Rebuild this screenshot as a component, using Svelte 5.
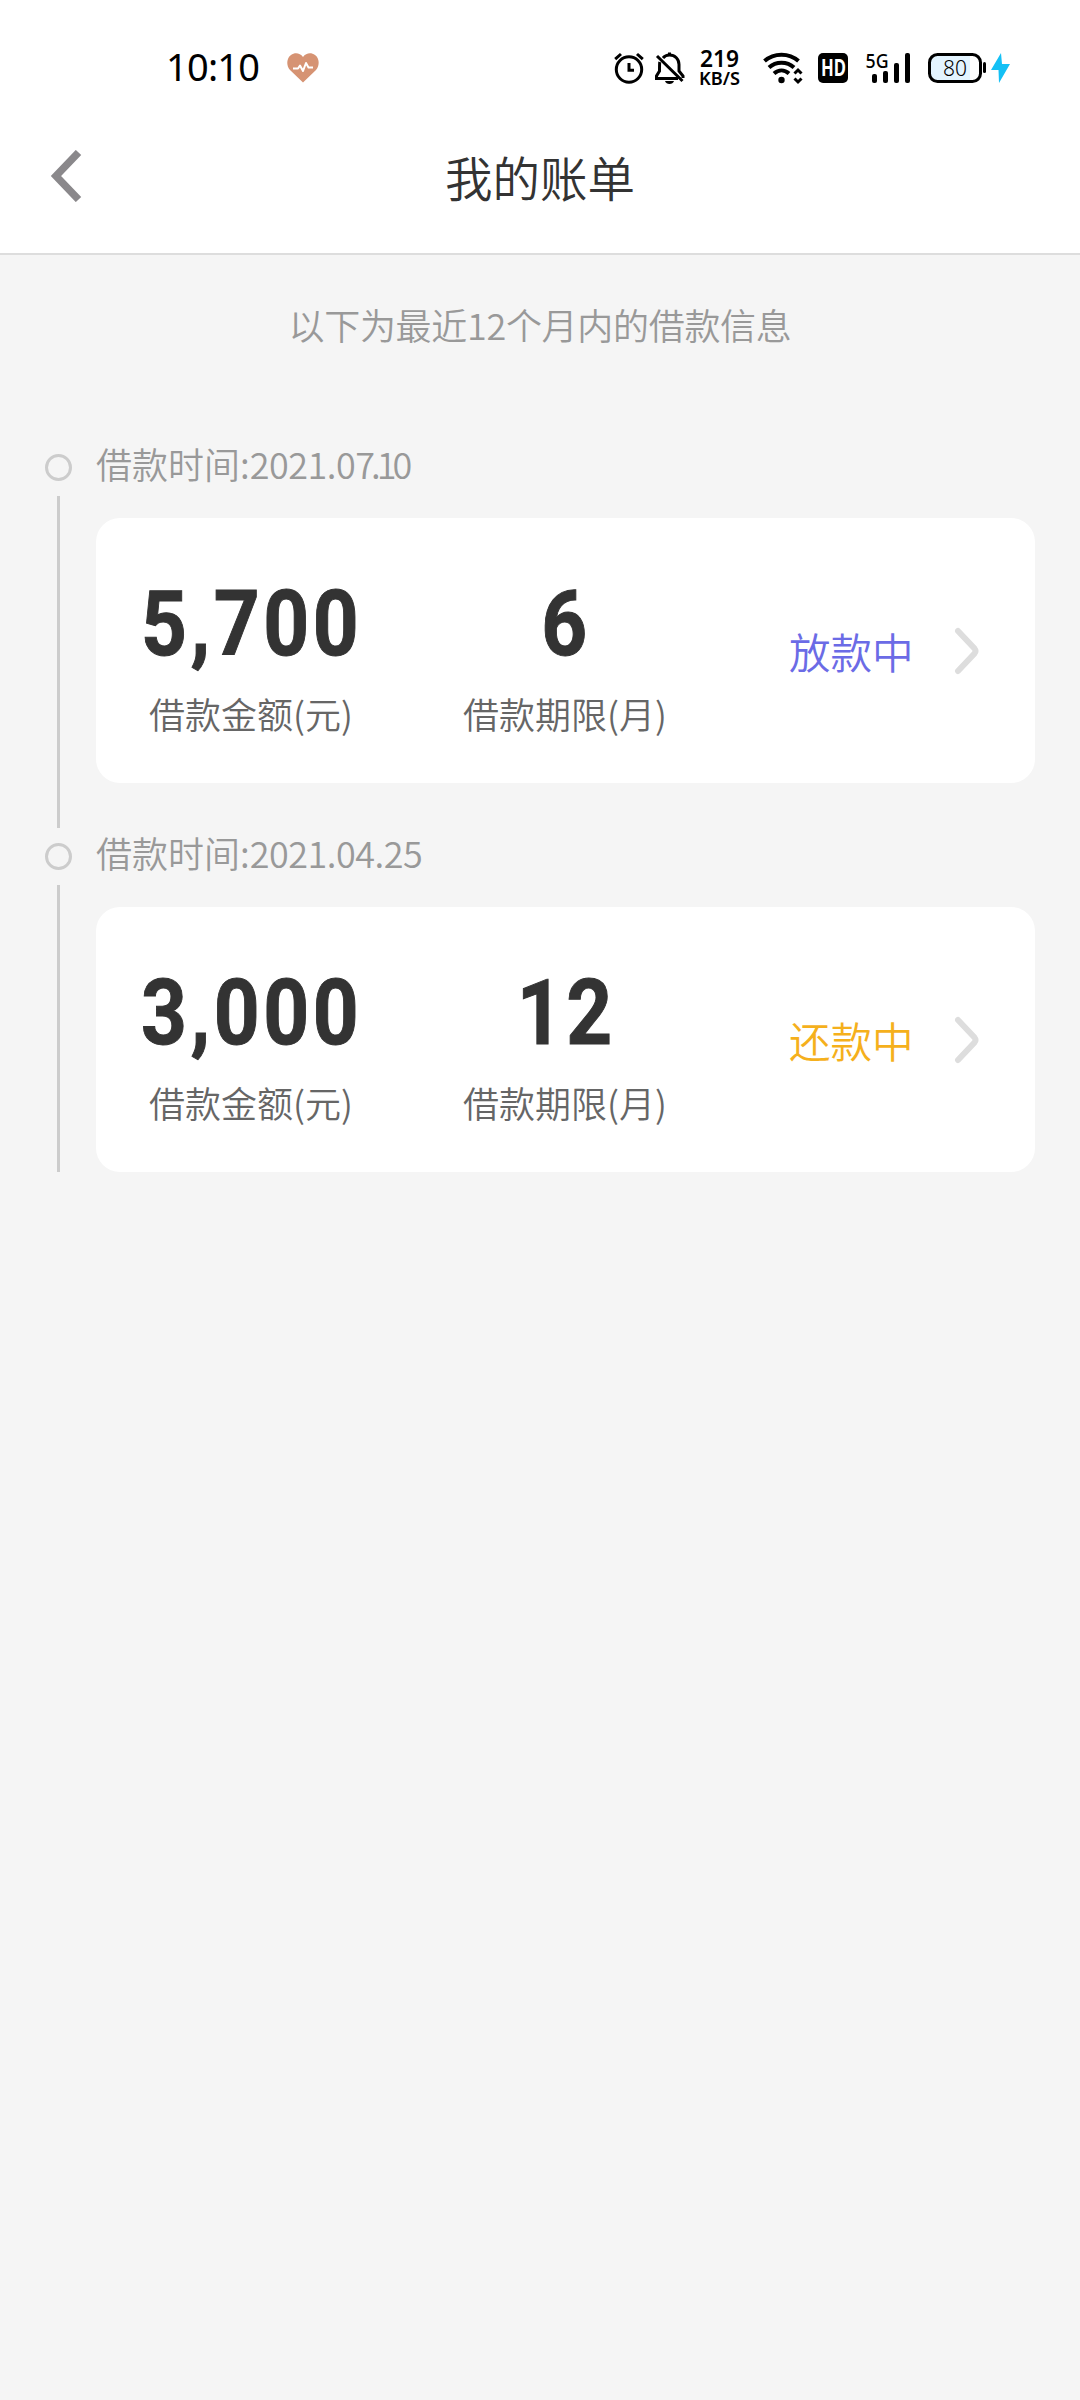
<script>
	// dateEnd holds the digits that are set closer together
	const bills = [
		{ date: '2021.0', dateEnd: '7.10', amount: '5,700', months: 6, status: '放款中', state: 'lending' },
		{ date: '2021.04.25', dateEnd: '', amount: '3,000', months: 12, status: '还款中', state: 'repaying' }
	];
</script>

<div class="page">
	<div class="statusbar">
		<div class="left">
			<svg width="92" height="40" viewBox="0 0 92 40">
				<text x="-1" y="33" font-size="38" textLength="94">10:10</text>
			</svg>
			<svg class="heart" width="32" height="30" viewBox="0 0 32 30">
				<path
					d="M16 29.500 L3 17 C-1 12.500 -.5 5 4 2 C8 -.8 13 0 16 4 C19 0 24 -.8 28 2 C32.500 5 33 12.500 29 17 Z"
					fill="#d69373"
				/>
				<path d="M6 15.500 H11 L13 12.500 L16 18 L19 10 L21.500 14.500 H26" class="line white" />
			</svg>
		</div>
		<div class="right">
			<svg width="30" height="34" viewBox="0 0 30 34">
				<circle cx="15" cy="18.500" r="12.700" class="line" />
				<path d="M1.200 8.200 L7 3 M28.800 8.200 L23 3" class="line" />
				<path d="M15 12 V19.300 H20" class="line" />
			</svg>
			<svg class="bell" width="32" height="34" viewBox="0 0 32 34">
				<path
					d="M9 7 C11 4.500 13 4 15.500 4 C21 4 25 8 25 13.500 V20 L29 25 V27 M5.800 11 C5.500 12 5.500 14 5.500 20 L2.500 25 V27.500 H24"
					class="line"
				/>
				<path d="M15.500 1.500 V4 M3 5 L28.500 30" class="line" />
				<path d="M11 30 H20 C19 34 12 34 11 30 Z" />
			</svg>
			<svg class="speed" width="42" height="38" viewBox="0 0 42 38">
				<text x="0" y="18" font-size="24" textLength="39" lengthAdjust="spacingAndGlyphs">219</text>
				<text x="-1" y="36" font-size="18" textLength="41" lengthAdjust="spacingAndGlyphs">KB/S</text>
			</svg>
			<svg class="wifi" width="40" height="32" viewBox="0 0 40 32">
				<path d="M1.500 9 C11 .500 26 .500 35.500 9" class="line thick" />
				<path d="M6 15.500 C13 9 24 9 31 15.500" class="line thick" />
				<path d="M11 21.500 C15.500 17.500 21.500 17.500 26 21.500" class="line thick" />
				<circle cx="18.500" cy="28" r="3.200" />
				<path d="M31.500 21.500 L35 18 L38.500 21.500 M31.500 26.500 L35 30 L38.500 26.500" class="line" />
			</svg>
			<svg class="hd" width="30" height="30" viewBox="0 0 30 30">
				<rect width="30" height="30" rx="5" />
				<text x="3" y="23" font-size="23" fill="#fff" textLength="25" lengthAdjust="spacingAndGlyphs">HD</text>
			</svg>
			<svg class="signal" width="44" height="32" viewBox="0 0 44 32">
				<text x="-1.500" y="15.500" font-size="20" textLength="23" lengthAdjust="spacingAndGlyphs">5G</text>
				<rect x="5" y="22" width="5" height="9" rx="2" />
				<rect x="16" y="19" width="5" height="12" rx="2" />
				<rect x="27" y="11" width="5" height="20" rx="2" />
				<rect x="38" y="1" width="5" height="30" rx="2" />
			</svg>
			<svg class="battery" width="84" height="32" viewBox="0 0 84 32">
				<rect x="1.500" y="2.500" width="51" height="27" rx="8" fill="#fff" />
				<path d="M8 3 H42 V29 H8 Q2 29 2 23 V9 Q2 3 8 3 Z" fill="#e3f4ff" />
				<rect x="1.500" y="2.500" width="51" height="27" rx="8" class="line" />
				<rect x="55" y="10" width="3" height="11" rx="1.500" />
				<text x="15" y="23.500" font-size="21" textLength="24" lengthAdjust="spacingAndGlyphs">80</text>
				<path d="M73 1 L63 18 H70.500 L71 31 L82 12 H74 Z" fill="#14c0f5" />
			</svg>
		</div>
	</div>

	<header>
		<button aria-label="返回">
			<svg width="32" height="52" viewBox="0 0 32 52">
				<path d="M28.500 2.500 L6 26 L28.500 49.500" />
			</svg>
		</button>
		<h1>我的账单</h1>
	</header>

	<p class="hint">以下为最近12个月内的借款信息</p>

	<ul>
		{#each bills as bill}
			<li>
				<div class="rail">
					<span class="dot"></span>
					<span class="track"></span>
				</div>
				<div class="content">
					<div class="date">借款时间:<span class="digits">{bill.date}<span class="tight">{bill.dateEnd}</span></span></div>
					<div class="card">
						<div class="cell amount">
							<strong>{bill.amount}</strong>
							<span>借款金额(元)</span>
						</div>
						<div class="cell months">
							<strong>{bill.months}</strong>
							<span>借款期限(月)</span>
						</div>
						<div class="status {bill.state}">{bill.status}</div>
						<svg class="arrow" width="26" height="48" viewBox="0 0 26 48">
							<path d="M4 4 L20.500 21.500 Q22.500 24 20.500 26.500 L4 44" />
						</svg>
					</div>
				</div>
			</li>
		{/each}
	</ul>
</div>

<style>
	:global(body) {
		background: #f5f5f5;
	}
	.page {
		width: 1080px;
		min-height: 2400px;
		background: #f5f5f5;
		font-family: 'Noto Sans CJK SC', sans-serif;
	}
	.statusbar {
		display: flex;
		justify-content: space-between;
		height: 136px;
		padding: 0 68px 0 167px;
		box-sizing: border-box;
		align-items: center;
		background: #fff;
	}
	.left,
	.right {
		display: flex;
		align-items: center;
	}
	.statusbar svg {
		font-family: 'Noto Sans', sans-serif;
		overflow: visible;
	}
	.heart {
		margin-left: 28px;
	}
	.bell {
		margin-left: 10px;
	}
	.speed {
		margin-left: 14px;
		font-weight: 600;
	}
	.wifi {
		margin-left: 21px;
	}
	.hd {
		margin-left: 15px;
		font-weight: 700;
	}
	.signal {
		margin-left: 19px;
		font-weight: 500;
	}
	.battery {
		margin-left: 17px;
		font-weight: 300;
	}
	.line {
		fill: none;
		stroke: #000;
		stroke-width: 3;
	}
	.thick {
		stroke-width: 4;
	}
	.white {
		stroke: #fff;
		stroke-width: 2;
		stroke-linejoin: round;
	}
	header {
		display: grid;
		grid-template-columns: 130px 1fr 130px;
		align-items: center;
		height: 119px;
		padding-bottom: 35px;
		box-sizing: border-box;
		background: #fff;
		border-bottom: 2px solid #ddd;
	}
	button {
		padding: 0 0 3px 50px;
		border: none;
		background: none;
		display: flex;
	}
	button path {
		fill: none;
		stroke: #8a888b;
		stroke-width: 7.500;
	}
	h1 {
		margin: 0;
		font-size: 47.500px;
		line-height: 80px;
		font-weight: 350;
		text-align: center;
		color: #333;
	}
	.hint {
		margin: 0;
		padding: 44px 0 2px;
		line-height: 50px;
		font-size: 36px;
		font-weight: 350;
		letter-spacing: -0.300px;
		text-align: center;
		color: #999;
	}
	ul {
		list-style: none;
		margin: 0;
		padding: 90px 45px 0;
	}
	li {
		display: flex;
		gap: 24px;
		height: 389px;
	}
	li:last-child {
		height: 342px;
	}
	.rail {
		width: 27px;
		display: flex;
		flex-direction: column;
		align-items: center;
		padding-top: 13px;
	}
	.dot {
		width: 27px;
		height: 27px;
		box-sizing: border-box;
		border: 3px solid #ccc;
		border-radius: 50%;
		flex-shrink: 0;
	}
	.track {
		flex: 1;
		width: 3px;
		margin: 15px 0 2px;
		background: #ccc;
	}
	li:last-child .track {
		margin-bottom: 0;
	}
	.content {
		flex: 1;
	}
	.date {
		height: 77px;
		line-height: 45px;
		font-size: 36px;
		font-weight: 350;
		color: #999;
		box-sizing: border-box;
	}
	.digits {
		letter-spacing: -0.500px;
	}
	.tight {
		letter-spacing: -4px;
	}
	.card {
		display: flex;
		align-items: center;
		height: 265px;
		border-radius: 24px;
		background: #fff;
	}
	.cell {
		display: flex;
		flex-direction: column;
		align-items: center;
		padding-top: 15px;
		font-weight: 350;
		font-size: 36px;
		line-height: 50px;
		color: #666;
		white-space: nowrap;
	}
	.amount {
		width: 310px;
	}
	.months {
		width: 318px;
	}
	.cell strong {
		margin: 0 -2px 18px 0;
		font-family: Roboto, sans-serif;
		font-size: 91px;
		line-height: 91px;
		font-weight: 700;
		letter-spacing: 4px;
		color: #333;
		-webkit-text-stroke: 1px #333;
		transform: scaleX(0.88);
	}
	.status {
		width: 130px;
		margin-left: 65px;
		font-size: 41.500px;
		font-weight: 350;
		line-height: 60px;
	}
	.lending {
		color: #6b6be6;
	}
	.repaying {
		color: #f5b01c;
	}
	.arrow {
		margin-left: 35px;
	}
	.arrow path {
		fill: none;
		stroke: #ddd;
		stroke-width: 6;
		stroke-linecap: round;
	}
</style>
